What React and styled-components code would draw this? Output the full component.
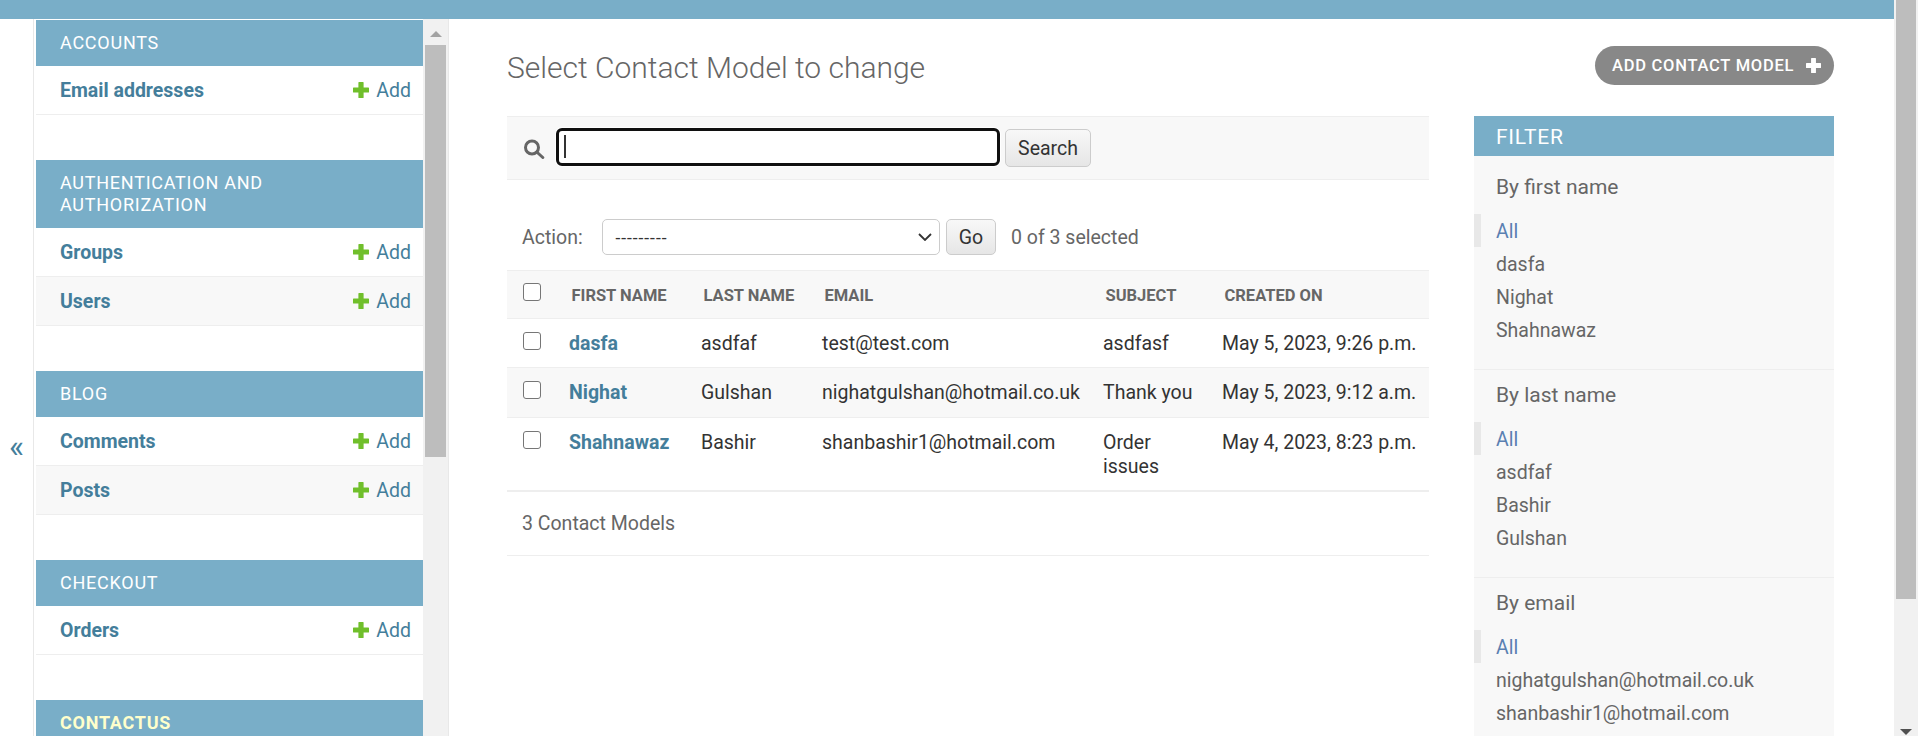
import React from "react";
import styled, { createGlobalStyle } from "styled-components";

const Global = createGlobalStyle`
  html, body { height: 736px; overflow: hidden; }
  body { margin: 0; background: #fff; color: #333; font-family: Roboto, "Liberation Sans", sans-serif; font-size: 19.5px; }
`;

const Window = styled.div`
  height: 736px;
  display: flex;
  overflow: hidden;
`;
const Page = styled.div`
  flex: 1;
  min-width: 0;
  display: flex;
  flex-direction: column;
`;
const TopBar = styled.div`
  height: 19px;
  flex: none;
  background: #79aec8;
`;
const Shell = styled.div`
  flex: 1;
  min-height: 0;
  display: flex;
  align-items: flex-start;
`;
const Toggle = styled.button`
  width: 33px;
  height: 717px;
  flex: none;
  box-sizing: border-box;
  padding: 136px 0 0;
  border: 0;
  background: #fff;
  color: #447e9b;
  font: 400 32px Roboto, sans-serif;
  display: flex;
  align-items: center;
  justify-content: center;
`;
const Nav = styled.nav`
  flex: none;
  box-sizing: border-box;
  width: 416px;
  height: 717px;
  display: flex;
  border-left: 1px solid #e8e8e8;
  border-right: 1px solid #e8e8e8;
  padding-left: 2px;
  overflow: hidden;
`;
const NavInner = styled.div`
  flex: 1;
  min-width: 0;
  padding-top: 1px;
`;
const ScrollTrack = styled.div`
  flex: none;
  width: ${(p) => p.$w}px;
  box-sizing: border-box;
  padding: 0 2px;
  background: #f1f1f1;
  display: flex;
  flex-direction: column;
  align-items: stretch;
`;
const ScrollThumb = styled.div`
  flex: none;
  height: ${(p) => p.$h}px;
  background: #bdbdbd;
`;
const ArrowUp = styled.div`
  flex: none;
  align-self: center;
  width: 0;
  height: 0;
  margin: 12px 0 8px;
  border-left: 6px solid transparent;
  border-right: 6px solid transparent;
  border-bottom: 6px solid #a3a3a3;
`;
const ArrowDown = styled.div`
  flex: none;
  align-self: center;
  width: 0;
  height: 0;
  margin-top: 130px;
  border-left: 6px solid transparent;
  border-right: 6px solid transparent;
  border-top: 6px solid #505050;
`;
const Module = styled.section`
  margin-bottom: 45px;
`;
const Caption = styled.h2`
  margin: 0;
  padding: 12px 12px 12px 24px;
  background: #79aec8;
  color: ${(p) => (p.$current ? "#ffc" : "#fff")};
  font-size: 18px;
  font-weight: ${(p) => (p.$current ? 700 : 400)};
  line-height: 22px;
  letter-spacing: 0.75px;
  text-transform: uppercase;
`;
const NavRow = styled.div`
  box-sizing: border-box;
  height: 49px;
  display: flex;
  align-items: center;
  justify-content: space-between;
  padding: 0 12px 0 24px;
  background: ${(p) => (p.$alt ? "#f8f8f8" : "#fff")};
  border-bottom: 1px solid #eee;
  color: #447e9b;
`;
const NavLink = styled.a`
  font-weight: 700;
`;
const AddLink = styled.a`
  display: flex;
  align-items: center;
  gap: 7px;
`;
const PlusIcon = styled.svg`
  width: ${(p) => p.$size || 16}px;
  height: ${(p) => p.$size || 16}px;
  flex: none;
  fill: ${(p) => p.$color || "#70bf2b"};
`;
const Plus = (props) => (
  <PlusIcon viewBox="0 0 16 16" {...props}>
    <path d="M6 0h4a.6.6 0 0 1 .6.6v4.8h4.8a.6.6 0 0 1 .6.6v4a.6.6 0 0 1-.6.6h-4.8v4.8a.6.6 0 0 1-.6.6H6a.6.6 0 0 1-.6-.6v-4.8H.6a.6.6 0 0 1-.6-.6V6a.6.6 0 0 1 .6-.6h4.8V.6A.6.6 0 0 1 6 0z" />
  </PlusIcon>
);
const Main = styled.main`
  flex: 1;
  min-width: 0;
  padding: 27px 60px 0 58px;
`;
const TitleRow = styled.div`
  display: flex;
  align-items: center;
  justify-content: space-between;
  height: 39px;
  margin-bottom: 31px;
`;
const Title = styled.h1`
  margin: 0;
  padding-top: 3px;
  font-size: 30px;
  font-weight: 300;
  color: #666;
`;
const AddButton = styled.a`
  box-sizing: border-box;
  height: 39px;
  width: 239px;
  display: flex;
  align-items: center;
  justify-content: space-between;
  padding: 0 13px 0 17px;
  border-radius: 20px;
  background: #888;
  color: #fff;
  font-size: 16.5px;
  font-weight: 500;
  letter-spacing: 0.75px;
  text-transform: uppercase;
`;
const Columns = styled.div`
  display: flex;
  gap: 45px;
  align-items: flex-start;
`;
const ChangeList = styled.div`
  width: 922px;
  flex: none;
`;
const SearchBar = styled.form`
  box-sizing: border-box;
  height: 64px;
  margin: 0;
  display: flex;
  align-items: center;
  padding-left: 16px;
  background: #f8f8f8;
  border-top: 1px solid #eee;
  border-bottom: 1px solid #eee;
`;
const SearchIcon = styled.svg`
  width: 22px;
  height: 20px;
  flex: none;
  margin: 2px 11px 0 0;
`;
const SearchBox = styled.div`
  position: relative;
  width: 444px;
  height: 38px;
  flex: none;
  margin-bottom: 2px;
`;
const SearchInput = styled.input`
  box-sizing: border-box;
  width: 100%;
  height: 100%;
  display: block;
  padding: 0 5px;
  border: 3px solid #101010;
  border-radius: 6px;
  outline: 0;
  box-shadow: 0 0 0 1px #fff;
  background: #fff;
  font: 400 19.5px Roboto, sans-serif;
`;
const Caret = styled.span`
  position: absolute;
  left: 8px;
  top: 7px;
  width: 2px;
  height: 23px;
  background: #333;
`;
const GreyButton = styled.button`
  box-sizing: border-box;
  height: ${(p) => p.$h}px;
  width: ${(p) => p.$w}px;
  margin-left: ${(p) => p.$ml}px;
  flex: none;
  padding: 0;
  border: 1px solid #ccc;
  border-radius: 5px;
  background: linear-gradient(#f8f8f8, #e6e6e6);
  color: #333;
  font: 400 19.5px Roboto, sans-serif;
`;
const Actions = styled.div`
  display: flex;
  align-items: center;
  padding: 39px 0 15px 15px;
  color: #666;
`;
const ActionLabel = styled.label`
  width: 80px;
  flex: none;
`;
const SelectWrap = styled.div`
  position: relative;
  width: 338px;
  height: 36px;
  flex: none;
`;
const ActionSelect = styled.select`
  appearance: none;
  width: 100%;
  height: 100%;
  box-sizing: border-box;
  padding: 0 12px;
  border: 1px solid #ccc;
  border-radius: 5px;
  background: #fff;
  color: #333;
  font: 400 17.33px "Liberation Sans", sans-serif;
`;
const Chevron = styled.svg`
  position: absolute;
  right: 8px;
  top: 14px;
  width: 14px;
  height: 8px;
  pointer-events: none;
`;
const SelectedCount = styled.span`
  margin-left: 15px;
`;
const Table = styled.table`
  width: 922px;
  table-layout: fixed;
  border-collapse: separate;
  border-spacing: 0;
  border-bottom: 1px solid #eee;
`;
const HeadRow = styled.tr`
  background: #f8f8f8;
`;
const Th = styled.th`
  box-sizing: border-box;
  height: 49px;
  padding: 2px 0 0 13.5px;
  border-top: 1px solid #eee;
  border-bottom: 1px solid #eee;
  color: #666;
  font-size: 16.5px;
  font-weight: 700;
  line-height: 20px;
  text-align: left;
  text-transform: uppercase;
`;
const CheckTh = styled(Th)`
  padding: 0 0 6px 15.5px;
`;
const Tr = styled.tr`
  background: ${(p) => (p.$alt ? "#f8f8f8" : "#fff")};
`;
const Td = styled.td`
  padding: 13px 11px 11.33px;
  border-bottom: 1px solid #eee;
  line-height: 24px;
  vertical-align: top;
  overflow-wrap: break-word;
`;
const CheckTd = styled(Td)`
  padding: 13px 0 0 15.5px;
`;
const RowLink = styled.a`
  color: #447e9b;
  font-weight: 700;
`;
const Check = styled.input.attrs({ type: "checkbox" })`
  appearance: none;
  display: block;
  width: 18px;
  height: 18px;
  margin: 0;
  border: 1.33px solid #767676;
  border-radius: 3px;
  background: #fff;
`;
const Paginator = styled.p`
  box-sizing: border-box;
  height: 64px;
  margin: 0;
  padding: 1px 15px 0;
  display: flex;
  align-items: center;
  border-bottom: 1px solid #eee;
  color: #666;
`;
const Filter = styled.aside`
  width: 360px;
  flex: none;
  background: #f8f8f8;
  color: #666;
`;
const FilterTitle = styled.h2`
  margin: 0;
  height: 40px;
  padding-left: 22px;
  background: #79aec8;
  color: #fff;
  font-size: 21px;
  font-weight: 400;
  letter-spacing: 0.75px;
  line-height: 42px;
  text-transform: uppercase;
`;
const FilterSection = styled.section`
  padding-bottom: 23px;
  border-bottom: 1px solid #eee;
`;
const FilterHeading = styled.h3`
  margin: 0;
  padding: ${(p) => (p.$first ? "21px" : "15px")} 22px 17px;
  font-size: 21px;
  font-weight: 400;
  line-height: 20px;
`;
const FilterList = styled.ul`
  margin: 0;
  padding: 0;
  list-style: none;
`;
const FilterItem = styled.li`
  box-sizing: border-box;
  height: 33px;
  padding-left: ${(p) => (p.$selected ? "15px" : "22px")};
  border-left: ${(p) => (p.$selected ? "7px solid #e8e8e8" : "0")};
  color: ${(p) => (p.$selected ? "#5b80b2" : "#666")};
  line-height: 35px;
`;

const modules = [
  { name: "Accounts", rows: ["Email addresses"] },
  { name: "Authentication and Authorization", rows: ["Groups", "Users"] },
  { name: "Blog", rows: ["Comments", "Posts"] },
  { name: "Checkout", rows: ["Orders"] },
  { name: "ContactUs", rows: [], current: true },
];
const rows = [
  ["dasfa", "asdfaf", "test@test.com", "asdfasf", "May 5, 2023, 9:26 p.m."],
  ["Nighat", "Gulshan", "nighatgulshan@hotmail.co.uk", "Thank you", "May 5, 2023, 9:12 a.m."],
  ["Shahnawaz", "Bashir", "shanbashir1@hotmail.com", "Order issues", "May 4, 2023, 8:23 p.m."],
];
const filters = [
  { title: "By first name", items: ["dasfa", "Nighat", "Shahnawaz"] },
  { title: "By last name", items: ["asdfaf", "Bashir", "Gulshan"] },
  { title: "By email", items: ["nighatgulshan@hotmail.co.uk", "shanbashir1@hotmail.com"] },
];
const cols = [51, 132, 121, 281, 119, 218];
const heads = ["First name", "Last name", "Email", "Subject", "Created on"];

export default function App() {
  return (
    <Window>
      <Global />
      <Page>
        <TopBar />
        <Shell>
          <Toggle aria-label="Toggle navigation">«</Toggle>
          <Nav>
            <NavInner>
              {modules.map((m) => (
                <Module key={m.name}>
                  <Caption $current={m.current}>{m.name}</Caption>
                  {m.rows.map((r, i) => (
                    <NavRow key={r} $alt={i % 2 === 1}>
                      <NavLink>{r}</NavLink>
                      <AddLink><Plus />Add</AddLink>
                    </NavRow>
                  ))}
                </Module>
              ))}
            </NavInner>
            <ScrollTrack $w={25}>
              <ArrowUp />
              <ScrollThumb $h={412} />
            </ScrollTrack>
          </Nav>
          <Main>
            <TitleRow>
              <Title>Select Contact Model to change</Title>
              <AddButton>Add Contact Model<Plus $size={15} $color="#fff" /></AddButton>
            </TitleRow>
            <Columns>
              <ChangeList>
                <SearchBar>
                  <SearchIcon viewBox="0 0 22 20" fill="none" stroke="#666" strokeWidth="3">
                    <circle cx="9" cy="8.5" r="6.5" />
                    <path d="M13.8 13l6 5.5" strokeLinecap="round" />
                  </SearchIcon>
                  <SearchBox>
                    <SearchInput />
                    <Caret />
                  </SearchBox>
                  <GreyButton type="button" $w={86} $h={38} $ml={5}>Search</GreyButton>
                </SearchBar>
                <Actions>
                  <ActionLabel>Action:</ActionLabel>
                  <SelectWrap>
                    <ActionSelect defaultValue="">
                      <option value="">---------</option>
                    </ActionSelect>
                    <Chevron viewBox="0 0 14 8" fill="none" stroke="#333" strokeWidth="1.8">
                      <path d="M1 1l6 6 6-6" />
                    </Chevron>
                  </SelectWrap>
                  <GreyButton type="button" $w={50} $h={36} $ml={6}>Go</GreyButton>
                  <SelectedCount>0 of 3 selected</SelectedCount>
                </Actions>
                <Table>
                  <colgroup>
                    {cols.map((w, i) => <col key={i} width={w} />)}
                  </colgroup>
                  <thead>
                    <HeadRow>
                      <CheckTh><Check /></CheckTh>
                      {heads.map((h) => <Th key={h}>{h}</Th>)}
                    </HeadRow>
                  </thead>
                  <tbody>
                    {rows.map((r, i) => (
                      <Tr key={r[0]} $alt={i % 2 === 1}>
                        <CheckTd><Check /></CheckTd>
                        <Td><RowLink>{r[0]}</RowLink></Td>
                        {r.slice(1).map((c) => <Td key={c}>{c}</Td>)}
                      </Tr>
                    ))}
                  </tbody>
                </Table>
                <Paginator>3 Contact Models</Paginator>
              </ChangeList>
              <Filter>
                <FilterTitle>Filter</FilterTitle>
                {filters.map((f, i) => (
                  <FilterSection key={f.title}>
                    <FilterHeading $first={i === 0}>{f.title}</FilterHeading>
                    <FilterList>
                      <FilterItem $selected>All</FilterItem>
                      {f.items.map((t) => <FilterItem key={t}>{t}</FilterItem>)}
                    </FilterList>
                  </FilterSection>
                ))}
              </Filter>
            </Columns>
          </Main>
        </Shell>
      </Page>
      <ScrollTrack $w={24}>
        <ScrollThumb $h={599} />
        <ArrowDown />
      </ScrollTrack>
    </Window>
  );
}
